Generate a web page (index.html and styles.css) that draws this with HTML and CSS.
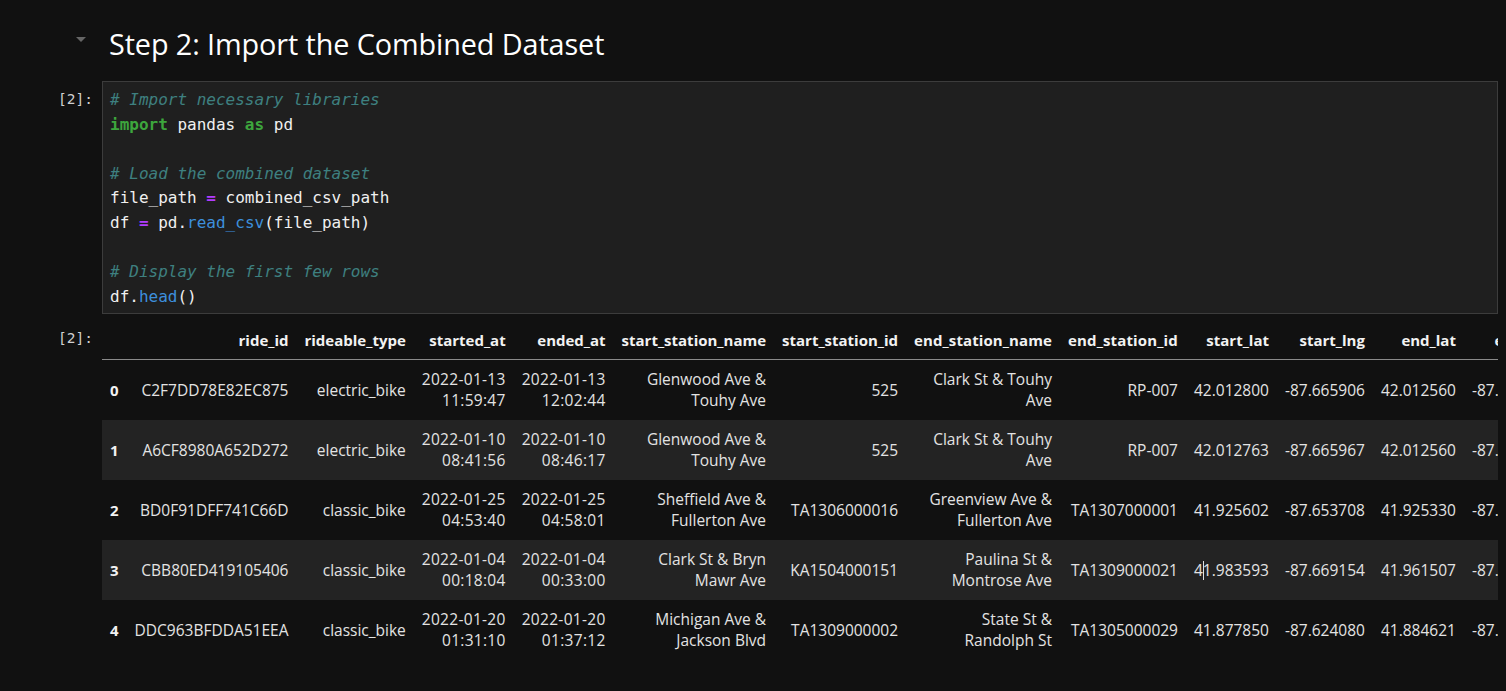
FILE: index.html
```html
<!DOCTYPE html>
<html>
<head>
<meta charset="utf-8">
<link rel="stylesheet" href="styles.css">
</head>
<body>
<div class="notebook">
  <div class="md-cell">
    <div class="collapser"><span class="tri"></span></div>
    <h2 class="md-title">Step 2: Import the Combined Dataset</h2>
  </div>

  <div class="cell">
    <div class="prompt">[2]:</div>
    <div class="editor"><pre class="code"><span class="c"># Import necessary libraries</span>
<span class="k">import</span> pandas <span class="k">as</span> pd

<span class="c"># Load the combined dataset</span>
file_path <span class="o">=</span> combined_csv_path
df <span class="o">=</span> pd.<span class="f">read_csv</span>(file_path)

<span class="c"># Display the first few rows</span>
df.<span class="f">head</span>()</pre></div>
  </div>

  <div class="cell out">
    <div class="prompt">[2]:</div>
    <div class="output">
      <table class="df">
        <thead>
          <tr>
            <th></th><th>ride_id</th><th>rideable_type</th><th>started_at</th><th>ended_at</th><th>start_station_name</th><th>start_station_id</th><th class="esn">end_station_name</th><th class="wide">end_station_id</th><th>start_lat</th><th>start_lng</th><th>end_lat</th><th>end_lng</th>
          </tr>
        </thead>
        <tbody>
          <tr>
            <th>0</th><td>C2F7DD78E82EC875</td><td>electric_bike</td><td><span class="nw">2022-01-13</span> <span class="nw">11:59:47</span></td><td><span class="nw">2022-01-13</span> <span class="nw">12:02:44</span></td><td>Glenwood Ave &amp; Touhy Ave</td><td>525</td><td>Clark St &amp; Touhy Ave</td><td>RP-007</td><td>42.012800</td><td>-87.665906</td><td>42.012560</td><td>-87.674367</td>
          </tr>
          <tr>
            <th>1</th><td>A6CF8980A652D272</td><td>electric_bike</td><td><span class="nw">2022-01-10</span> <span class="nw">08:41:56</span></td><td><span class="nw">2022-01-10</span> <span class="nw">08:46:17</span></td><td>Glenwood Ave &amp; Touhy Ave</td><td>525</td><td>Clark St &amp; Touhy Ave</td><td>RP-007</td><td>42.012763</td><td>-87.665967</td><td>42.012560</td><td>-87.674367</td>
          </tr>
          <tr>
            <th>2</th><td>BD0F91DFF741C66D</td><td>classic_bike</td><td><span class="nw">2022-01-25</span> <span class="nw">04:53:40</span></td><td><span class="nw">2022-01-25</span> <span class="nw">04:58:01</span></td><td>Sheffield Ave &amp; Fullerton Ave</td><td>TA1306000016</td><td>Greenview Ave &amp; Fullerton Ave</td><td>TA1307000001</td><td>41.925602</td><td>-87.653708</td><td>41.925330</td><td>-87.665800</td>
          </tr>
          <tr>
            <th>3</th><td>CBB80ED419105406</td><td>classic_bike</td><td><span class="nw">2022-01-04</span> <span class="nw">00:18:04</span></td><td><span class="nw">2022-01-04</span> <span class="nw">00:33:00</span></td><td>Clark St &amp; Bryn Mawr Ave</td><td>KA1504000151</td><td>Paulina St &amp; Montrose Ave</td><td>TA1309000021</td><td class="nowrap">4<span class="caret"></span>1.983593</td><td>-87.669154</td><td>41.961507</td><td>-87.671387</td>
          </tr>
          <tr>
            <th>4</th><td>DDC963BFDDA51EEA</td><td>classic_bike</td><td><span class="nw">2022-01-20</span> <span class="nw">01:31:10</span></td><td><span class="nw">2022-01-20</span> <span class="nw">01:37:12</span></td><td>Michigan Ave &amp; Jackson Blvd</td><td>TA1309000002</td><td>State St &amp; Randolph St</td><td>TA1305000029</td><td>41.877850</td><td>-87.624080</td><td>41.884621</td><td>-87.627834</td>
          </tr>
        </tbody>
      </table>
    </div>
  </div>
</div>
</body>
</html>
```

FILE: styles.css
```css
html, body {
  margin: 0;
  padding: 0;
  background: #111111;
  color: #e0e0e0;
  overflow: hidden;
}

.notebook {
  width: 1506px;
  height: 691px;
  overflow: hidden;
}

.md-cell {
  display: flex;
  align-items: center;
  padding: 21px 0 0 0;
  height: 44px;
}

.collapser {
  display: flex;
  justify-content: flex-end;
  padding-right: 23px;
  box-sizing: border-box;
  width: 109px;
}

.tri {
  display: block;
  width: 0;
  height: 0;
  border-left: 5.5px solid transparent;
  border-right: 5.5px solid transparent;
  border-top: 5px solid #666666;
  margin-top: -6px;
}

.md-title {
  margin: 0;
  font-family: "Open Sans", "Noto Sans", sans-serif;
  font-weight: 400;
  font-size: 28.8px;
  color: #ffffff;
  letter-spacing: -0.1px;
}

.cell {
  display: flex;
  align-items: flex-start;
  margin-top: 16px;
}

.prompt {
  width: 102px;
  box-sizing: border-box;
  padding-right: 9px;
  text-align: right;
  font-family: "DejaVu Sans Mono", monospace;
  font-size: 14.5px;
  color: #cfcfcf;
  padding-top: 10px;
  flex: none;
}

.editor {
  width: 1396px;
  box-sizing: border-box;
  border: 1px solid #3c3c3c;
  background: #1f1f1f;
  padding: 6px 7px 4px 7px;
  height: 233px;
}

.code {
  margin: 0;
  font-family: "DejaVu Sans Mono", monospace;
  font-size: 16px;
  line-height: 24.6px;
  color: #f0f0f0;
}

.c { color: #3e8080; font-style: italic; }
.k { color: #3da63d; font-weight: bold; }
.o { color: #b13cff; font-weight: bold; }
.f { color: #3d8fdc; }

.out {
  margin-top: 8px;
}

.out .prompt {
  padding-top: 8px;
}

.output {
  width: 1396px;
  overflow: hidden;
}

.df {
  border-collapse: collapse;
  width: 1px;
  font-family: "Open Sans", "Noto Sans", sans-serif;
  font-size: 15.5px;
  color: #e3e3e3;
}

.df th, .df td {
  text-align: right;
  padding: 9px 8px;
  line-height: 21px;
  vertical-align: middle;
}

.df thead th {
  font-size: 15px;
  font-weight: 700;
  color: #f2f2f2;
  border-bottom: 1px solid #8a8a8a;
  padding-top: 8px;
  padding-bottom: 8px;
  white-space: nowrap;
}

.df thead th.esn {
  letter-spacing: 0.1px;
}

.df thead th.wide {
  letter-spacing: 0.15px;
}

.df tbody th {
  font-size: 15px;
  font-weight: 700;
  text-align: left;
  color: #f2f2f2;
}

.nw {
  white-space: nowrap;
  letter-spacing: 0.3px;
}

.df td.nowrap {
  white-space: nowrap;
}

.caret {
  display: inline-block;
  width: 0;
  height: 19px;
  border-left: 1px solid #e0e0e0;
  margin-right: -1px;
  vertical-align: -4px;
}

.df tbody tr:nth-child(even) {
  background: #232323;
}
```
